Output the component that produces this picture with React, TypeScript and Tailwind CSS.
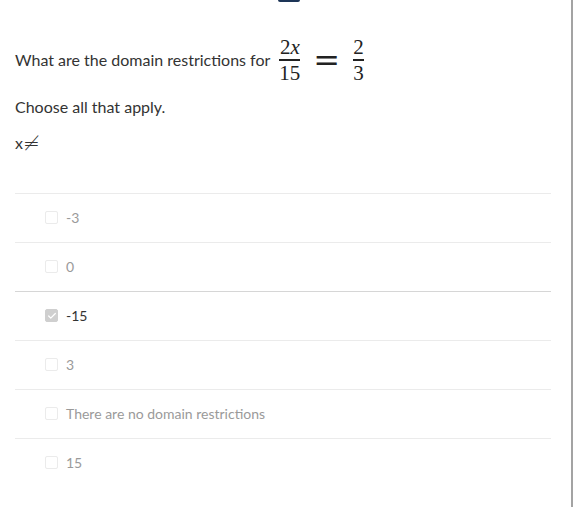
import { Check } from "lucide-react";

const options = [
  { label: "-3", checked: false },
  { label: "0", checked: false },
  { label: "-15", checked: true },
  { label: "3", checked: false },
  { label: "There are no domain restrictions", checked: false },
  { label: "15", checked: false },
];

function Frac({ num, den }: { num: React.ReactNode; den: React.ReactNode }) {
  return (
    <span className="inline-flex flex-col items-center px-[1px]">
      <span className="leading-[20px]">{num}</span>
      <span className="my-[2px] h-[1.5px] w-full bg-[#222]" />
      <span className="leading-[20px]">{den}</span>
    </span>
  );
}

export default function App() {
  return (
    <div className="w-[573px] h-[507px] border-r-2 border-[#a3a3a3] bg-white font-['Lato',sans-serif] text-[16px] text-[#333]">
      {/* bit of the header logo peeking in */}
      <div className="ml-[278px] h-[2px] w-[22px] rounded-b-full bg-[#1d3557]" />

      <div className="pl-[15px] pr-[20px]">
        <div className="mt-[35px] flex items-center gap-[8px]">
          <span>What are the domain restrictions for</span>
          <span className="flex items-center gap-[12px] font-['Liberation_Serif',serif] text-[21px] text-[#222]">
            <Frac
              num={
                <>
                  2<i>x</i>
                </>
              }
              den="15"
            />
            <span className="font-['DejaVu_Serif',serif] text-[32px] leading-none">=</span>
            <Frac num="2" den="3" />
          </span>
        </div>

        <p className="mt-[14px] leading-[20px]">Choose all that apply.</p>
        <p className="mt-[16px] flex h-[20px] items-center">
          x<span className="font-['DejaVu_Sans',sans-serif] text-[20px] font-light leading-none">≠</span>
        </p>

        <ul className="mt-[40px]">
          {options.map((o) => (
            <li
              key={o.label}
              className={`flex h-[49px] items-center gap-[8px] border-t pl-[30px] text-[14px] ${
                o.checked ? "border-[#d6d6d6] text-[#333]" : "border-[#ebebeb] text-[#9a9a9a]"
              }`}
            >
              <span
                className={`flex h-[13px] w-[13px] items-center justify-center rounded-[2px] border ${
                  o.checked ? "border-[#cfcfcf] bg-[#cfcfcf]" : "border-[#ebebeb] bg-white"
                }`}
              >
                {o.checked && <Check className="h-[10px] w-[10px] text-white" strokeWidth={3} />}
              </span>
              <span>{o.label}</span>
            </li>
          ))}
        </ul>
      </div>
    </div>
  );
}
